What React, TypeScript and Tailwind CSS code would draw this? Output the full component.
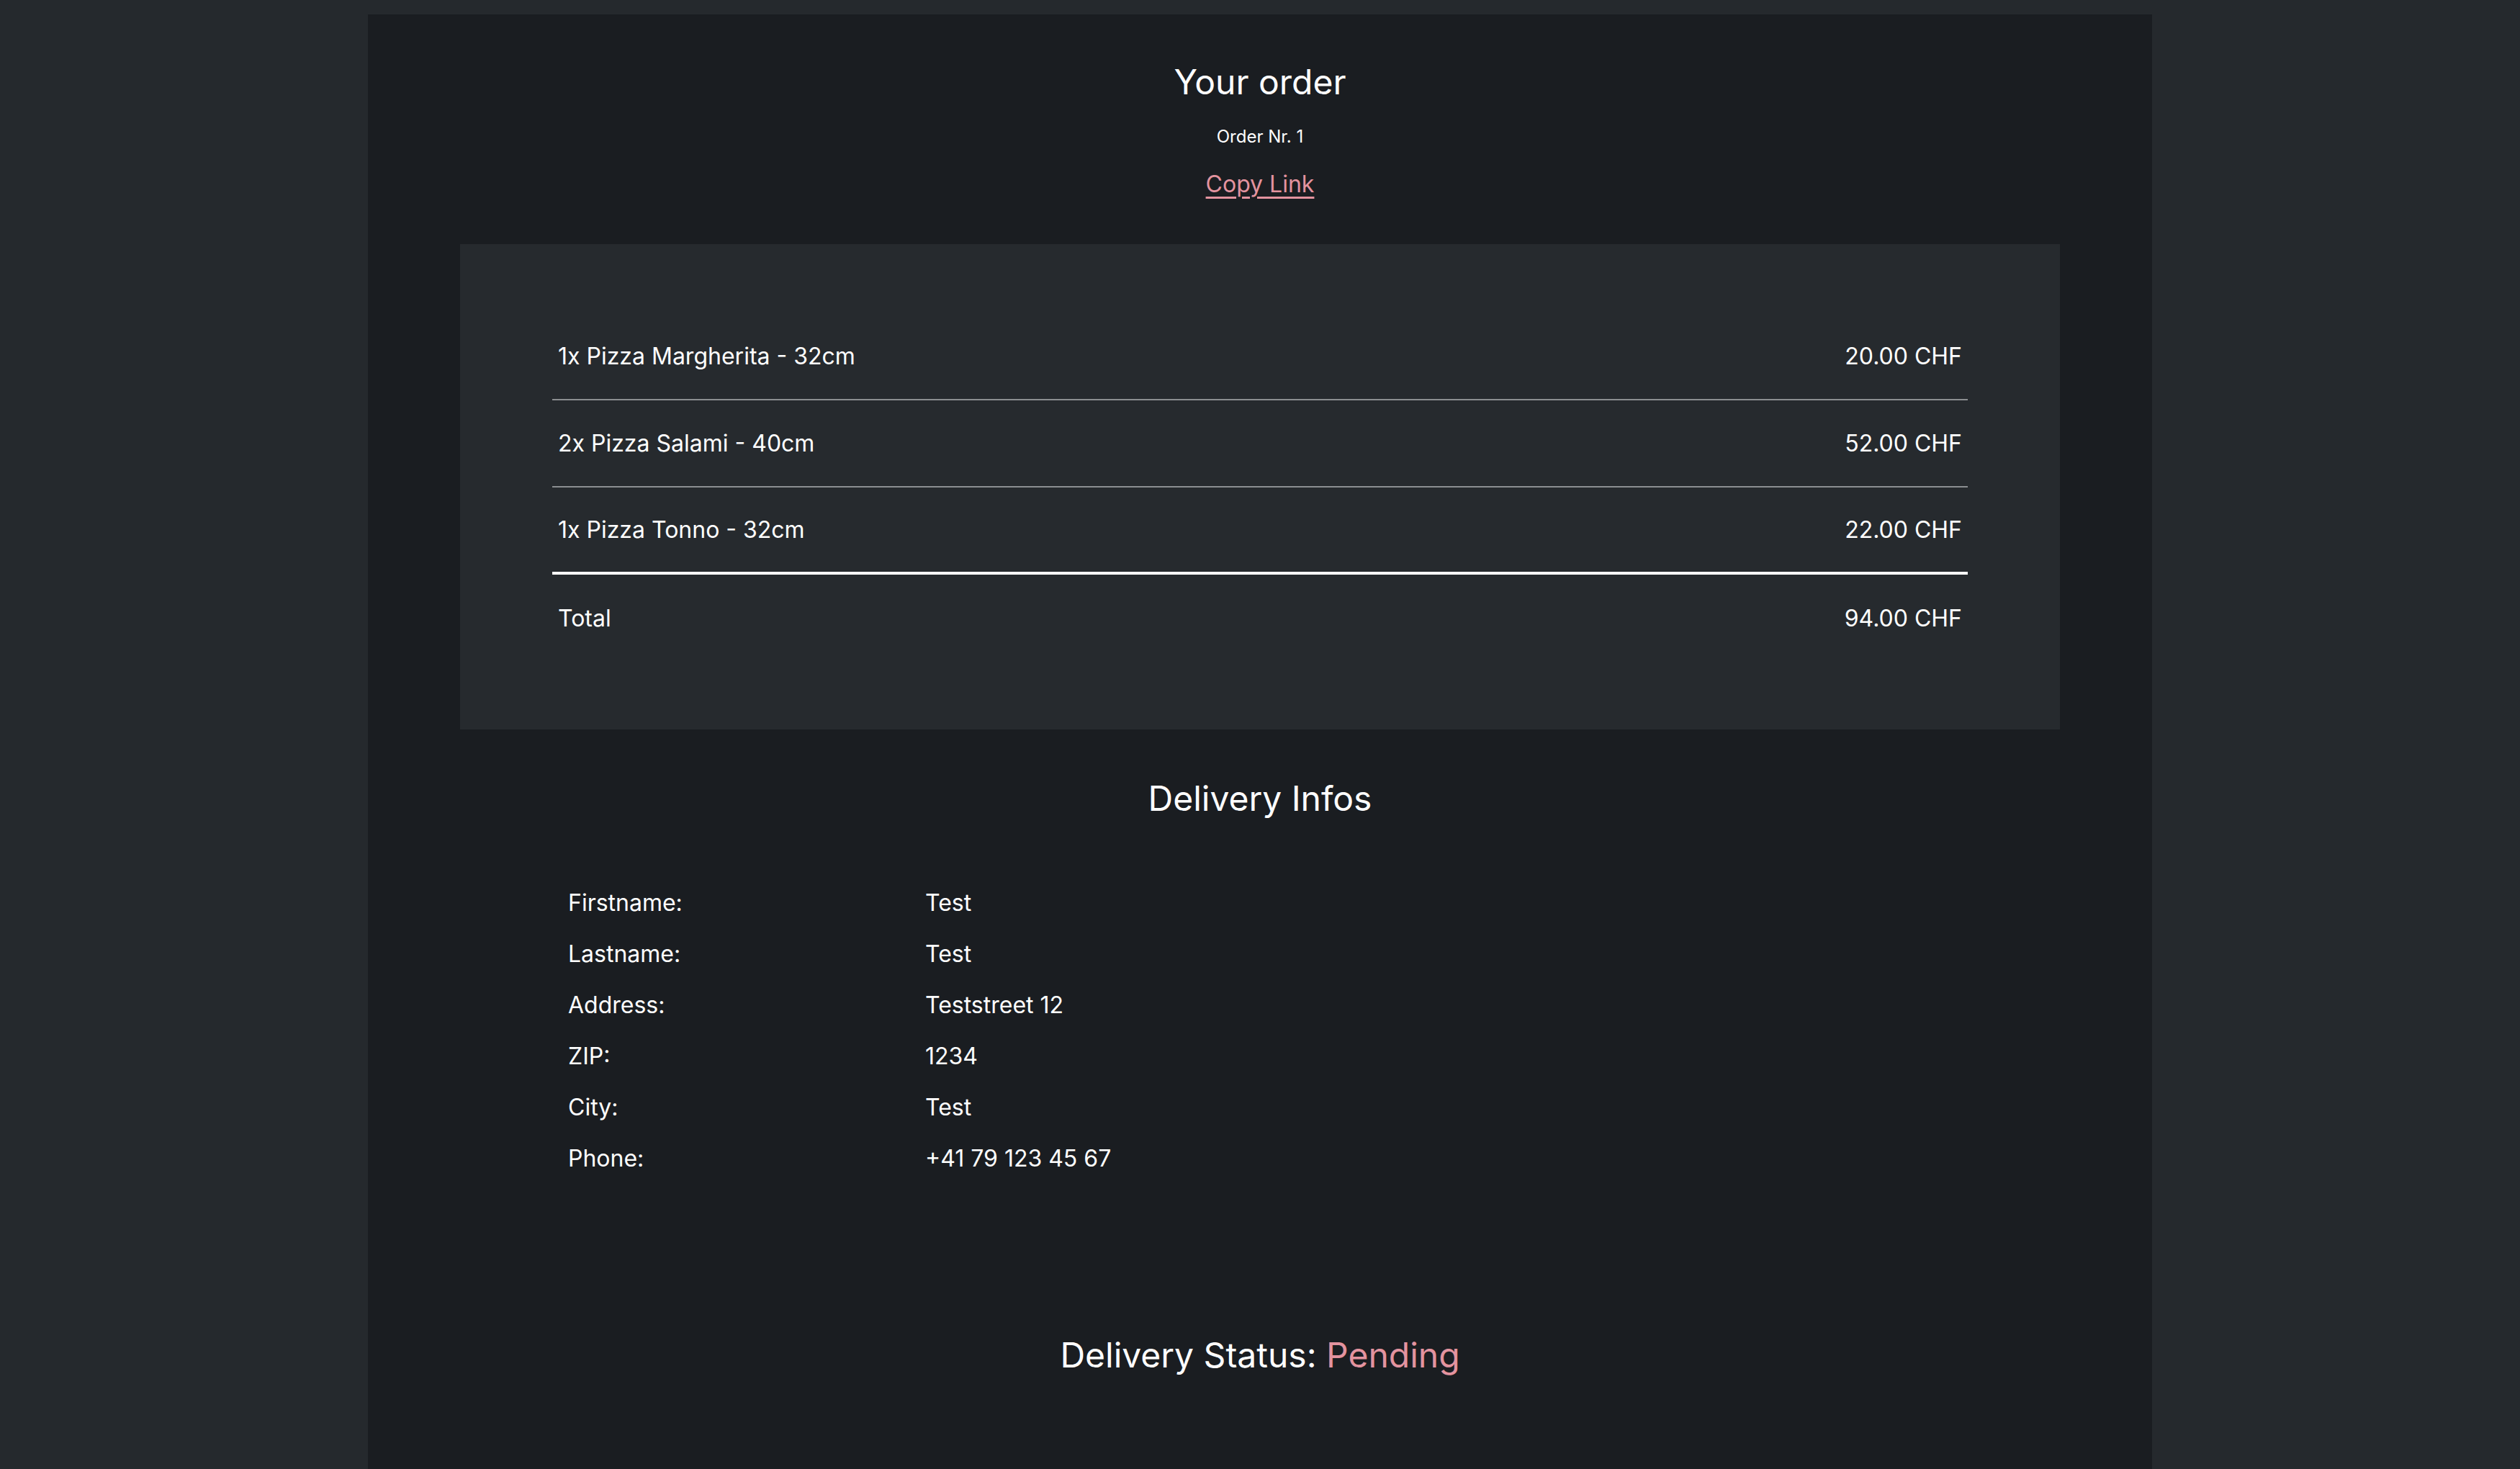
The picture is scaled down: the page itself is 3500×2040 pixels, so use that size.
import React from "react";

const items = [
  { name: "1x Pizza Margherita - 32cm", price: "20.00 CHF" },
  { name: "2x Pizza Salami - 40cm", price: "52.00 CHF" },
  { name: "1x Pizza Tonno - 32cm", price: "22.00 CHF" },
];

const infos = [
  ["Firstname:", "Test"],
  ["Lastname:", "Test"],
  ["Address:", "Teststreet 12"],
  ["ZIP:", "1234"],
  ["City:", "Test"],
  ["Phone:", "+41 79 123 45 67"],
];

export default function App() {
  return (
    <div
      className="min-h-screen bg-[#25292d] pt-[20px] text-white"
      style={{ fontFamily: "Inter, 'Noto Sans', sans-serif" }}
    >
      <div className="mx-auto w-[2478px] bg-[#1a1d21] px-32 pt-[58px] pb-[200px]">
        {/* HEADER */}
        <div className="flex flex-col items-center">
          <h1 className="text-[48px] leading-[72px] font-normal">Your order</h1>
          <p className="mt-[22px] text-[24px] leading-[36px]">Order Nr. 1</p>
          <a className="mt-[24px] text-[32px] leading-[48px] text-[#e3939f] underline underline-offset-[6px] decoration-[3px] cursor-pointer">
            Copy Link
          </a>
        </div>

        {/* ORDER TABLE */}
        <div className="mt-[59px] bg-[#262a2e] px-32 pt-[96px] pb-[94px]">
          {items.map((item, i) => (
            <div
              key={item.name}
              className={`flex h-[121px] items-center justify-between px-2 text-[32px] ${
                i === items.length - 1
                  ? "border-b-4 border-white"
                  : "border-b-2 border-[#8b8e91]"
              }`}
            >
              <span>{item.name}</span>
              <span>{item.price}</span>
            </div>
          ))}
          <div className="flex h-[121px] items-center justify-between px-2 text-[32px]">
            <span>Total</span>
            <span>94.00 CHF</span>
          </div>
        </div>

        {/* DELIVERY INFOS */}
        <h2 className="mt-[60px] text-center text-[48px] leading-[72px]">
          Delivery Infos
        </h2>
        <div className="mt-[73px] ml-[150px] grid grid-cols-[496px_1fr] text-[32px]">
          {infos.map(([label, value]) => (
            <React.Fragment key={label}>
              <div className="flex h-[71px] items-center">{label}</div>
              <div className="flex h-[71px] items-center">{value}</div>
            </React.Fragment>
          ))}
        </div>

        {/* STATUS */}
        <h2 className="mt-[202px] text-center text-[48px] leading-[72px]">
          Delivery Status: <span className="text-[#e3939f]">Pending</span>
        </h2>
      </div>
    </div>
  );
}
